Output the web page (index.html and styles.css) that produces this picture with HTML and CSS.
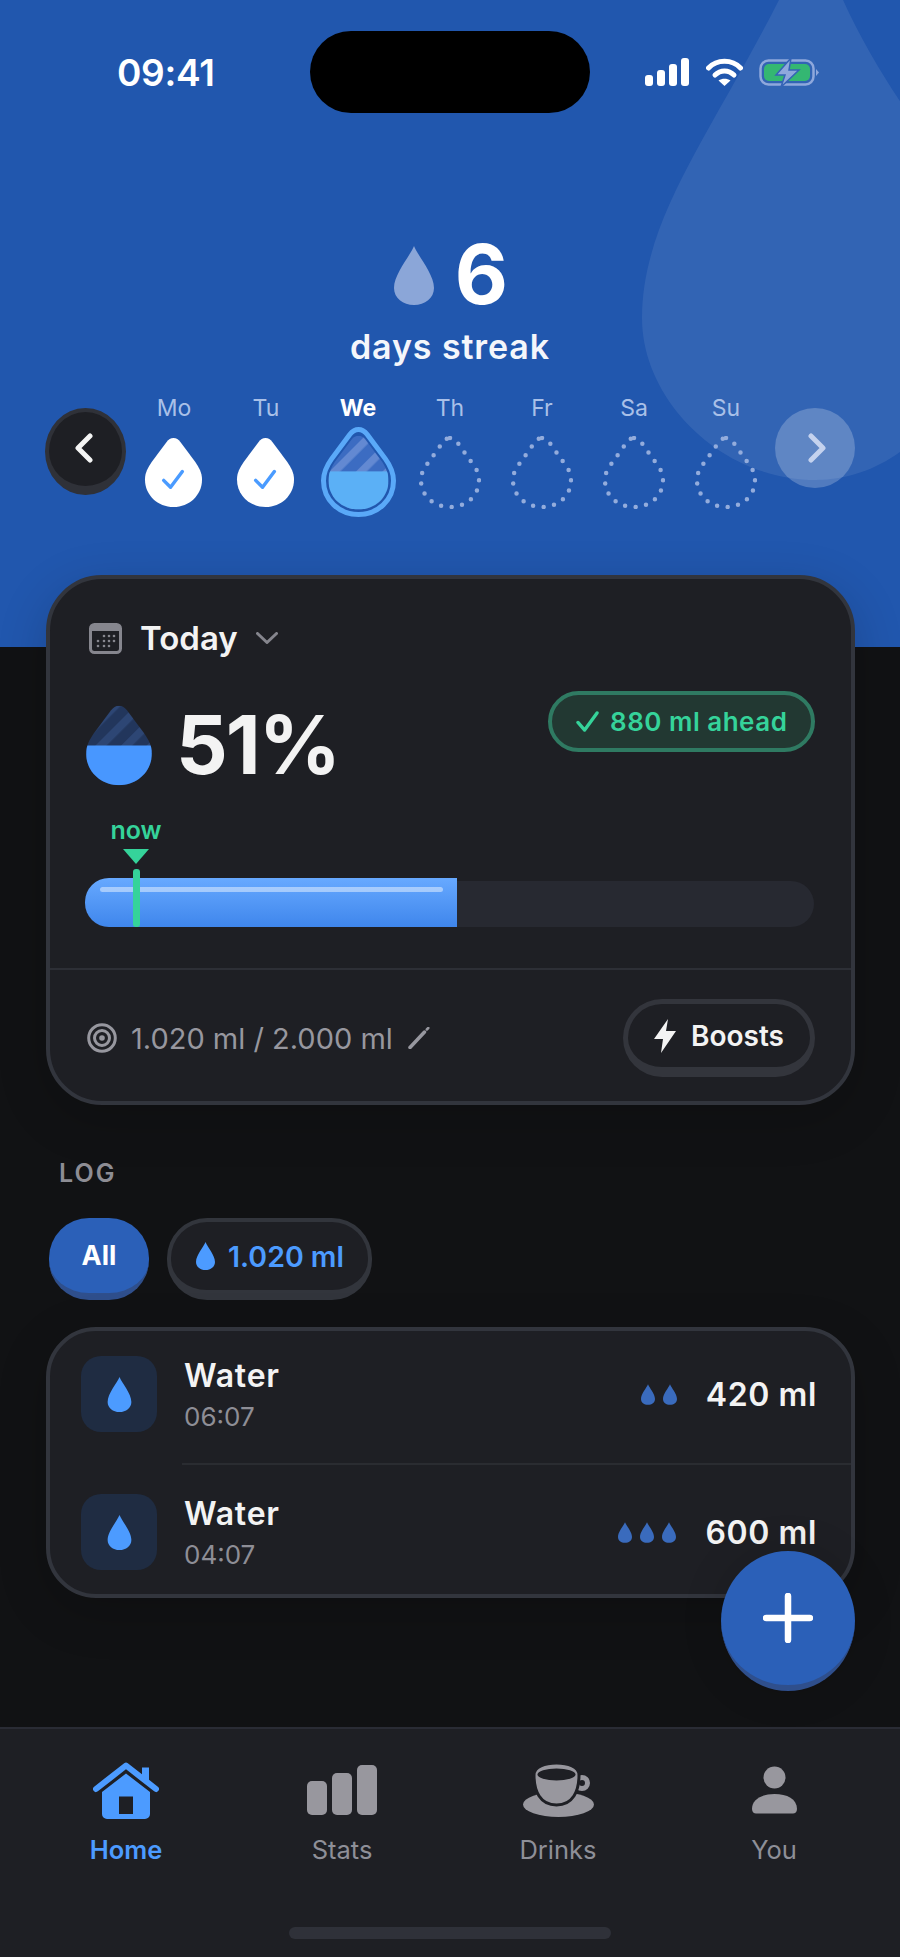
FILE: index.html
```html
<!DOCTYPE html>
<html lang="en">
<head>
<meta charset="utf-8">
<title>Water streak</title>
<link rel="stylesheet" href="styles.css">
</head>
<body>
<svg class="defs" width="0" height="0" aria-hidden="true">
  <defs>
    <symbol id="drop-fat" viewBox="0 0 60 72"><path d="M30 1C33 1 35 2.5 37 5L52 25C56 31 59 36 59 43C59 59 46 71 30 71C14 71 1 59 1 43C1 36 4 31 8 25L23 5C25 2.5 27 1 30 1Z"/></symbol>
    <symbol id="drop-slim" viewBox="0 0 40 59"><path d="M20 0C24 10 40 28 40 42C40 52 31 59 20 59C9 59 0 52 0 42C0 28 16 10 20 0Z"/></symbol>
    <pattern id="hatch-light" width="15" height="15" patternUnits="userSpaceOnUse" patternTransform="rotate(45)"><rect width="15" height="15" fill="#3c6cc2"/><rect width="6" height="15" fill="#6389d2"/></pattern>
    <pattern id="hatch-dark" width="16" height="16" patternUnits="userSpaceOnUse" patternTransform="rotate(45)"><rect width="16" height="16" fill="#22365c"/><rect width="7" height="16" fill="#2d4674"/></pattern>
    <clipPath id="clip-we"><path d="M30 7C32 7 34 8 35.500 10L49 28C52 33 54 37 54 43C54 56 43.500 66 30 66C16.500 66 6 56 6 43C6 37 8 33 11 28L24.500 10C26 8 28 7 30 7Z"/></clipPath>
    <clipPath id="clip-card"><path d="M30 1C33 1 35 2.500 37 5L52 25C56 31 59 36 59 43C59 59 46 71 30 71C14 71 1 59 1 43C1 36 4 31 8 25L23 5C25 2.500 27 1 30 1Z"/></clipPath>
  </defs>
</svg>

<main class="phone">
  <div class="sky"></div>
  <svg class="sky-drop" viewBox="0 0 320 560" aria-hidden="true"><path d="M175 0C190 70 230 140 275 205C310 260 335 300 335 375C335 480 260 560 175 560C80 560 1 480 1 398C1 280 100 180 175 0Z"/></svg>

  <header class="status">
    <div class="status-time">09:41</div>
    <div class="island"></div>
    <div class="status-icons">
      <div class="signal"><i class="s1"></i><i class="s2"></i><i class="s3"></i><i class="s4"></i></div>
      <svg class="wifi" viewBox="0 0 37 28"><path class="wifi-arc" d="M2.500 10C11 1 26 1 34.500 10"/><path class="wifi-arc" d="M9 17C14.500 11.500 22.500 11.500 28 17"/><path class="wifi-dot" d="M12.500 22.500C16 20 21 20 24.500 22.500L18.500 28Z"/></svg>
      <svg class="battery" viewBox="0 0 61 29"><rect class="bat-shell" x="1.500" y="2.500" width="53" height="24" rx="8"/><rect class="bat-fill" x="5" y="6" width="46" height="17" rx="5"/><path class="bat-nub" d="M57 11L60 14.500L57 18Z"/><path class="bat-bolt" d="M32 0L17 17H26L22 29L40 12H30Z"/></svg>
    </div>
  </header>

  <section class="streak">
    <div class="streak-count">
      <svg class="streak-drop"><use href="#drop-slim"/></svg>
      <span class="streak-num">6</span>
    </div>
    <div class="streak-label">days streak</div>
  </section>

  <section class="week">
    <button class="nav nav-prev" aria-label="Previous"><svg viewBox="0 0 20 30"><path d="M16 3L4 15L16 27"/></svg></button>
    <div class="days">
      <div class="day"><span class="day-name">Mo</span><div class="day-mark"><svg class="drop-done" viewBox="0 0 60 72"><use href="#drop-fat" width="60" height="72"/><path class="tick" d="M20 44L27 51L39 35"/></svg></div></div>
      <div class="day"><span class="day-name">Tu</span><div class="day-mark"><svg class="drop-done" viewBox="0 0 60 72"><use href="#drop-fat" width="60" height="72"/><path class="tick" d="M20 44L27 51L39 35"/></svg></div></div>
      <div class="day"><span class="day-name is-today">We</span><div class="day-mark"><svg class="drop-today" viewBox="0 0 60 72"><g clip-path="url(#clip-we)"><rect width="60" height="72" fill="url(#hatch-light)"/><rect y="35.500" width="60" height="37" fill="#5bb0f6"/></g><path class="today-ring" d="M30 2C33 2 35 3.500 37 6L51.500 25.500C55.500 31 58 36 58 43C58 58.500 45.500 70 30 70C14.500 70 2 58.500 2 43C2 36 4.500 31 8.500 25.500L23 6C25 3.500 27 2 30 2Z"/></svg></div></div>
      <div class="day"><span class="day-name">Th</span><div class="day-mark"><svg class="drop-empty" viewBox="0 0 62 73"><path d="M31 2C34 2 36 3.500 38 6L53 27C57 32 60 37 60 44C60 60 47 71 31 71C15 71 2 60 2 44C2 37 5 32 9 27L24 6C26 3.500 28 2 31 2Z"/></svg></div></div>
      <div class="day"><span class="day-name">Fr</span><div class="day-mark"><svg class="drop-empty" viewBox="0 0 62 73"><path d="M31 2C34 2 36 3.500 38 6L53 27C57 32 60 37 60 44C60 60 47 71 31 71C15 71 2 60 2 44C2 37 5 32 9 27L24 6C26 3.500 28 2 31 2Z"/></svg></div></div>
      <div class="day"><span class="day-name">Sa</span><div class="day-mark"><svg class="drop-empty" viewBox="0 0 62 73"><path d="M31 2C34 2 36 3.500 38 6L53 27C57 32 60 37 60 44C60 60 47 71 31 71C15 71 2 60 2 44C2 37 5 32 9 27L24 6C26 3.500 28 2 31 2Z"/></svg></div></div>
      <div class="day"><span class="day-name">Su</span><div class="day-mark"><svg class="drop-empty" viewBox="0 0 62 73"><path d="M31 2C34 2 36 3.500 38 6L53 27C57 32 60 37 60 44C60 60 47 71 31 71C15 71 2 60 2 44C2 37 5 32 9 27L24 6C26 3.500 28 2 31 2Z"/></svg></div></div>
    </div>
    <button class="nav nav-next" aria-label="Next"><svg viewBox="0 0 20 30"><path d="M4 3L16 15L4 27"/></svg></button>
  </section>

  <section class="card today">
    <div class="today-head">
      <svg class="cal" viewBox="0 0 33 31">
        <rect class="cal-frame" x="1.500" y="1.500" width="30" height="28" rx="4"/><path class="cal-top" d="M5 1.500H28A3.500 3.500 0 0 1 31.500 5V8H1.500V5A3.500 3.500 0 0 1 5 1.500Z"/>
        <g class="cal-dots"><circle cx="15" cy="13" r="1.300"/><circle cx="20" cy="13" r="1.300"/><circle cx="25" cy="13" r="1.300"/><circle cx="9" cy="18" r="1.300"/><circle cx="15" cy="18" r="1.300"/><circle cx="20" cy="18" r="1.300"/><circle cx="25" cy="18" r="1.300"/><circle cx="9" cy="23" r="1.300"/><circle cx="15" cy="23" r="1.300"/><circle cx="20" cy="23" r="1.300"/></g>
      </svg>
      <span class="today-title">Today</span>
      <svg class="chev" viewBox="0 0 22 12"><path d="M1.500 1.500L11 10.500L20.500 1.500"/></svg>
    </div>
    <div class="today-main">
      <div class="pct">
        <svg class="pct-drop" viewBox="0 0 60 72"><g clip-path="url(#clip-card)"><rect width="60" height="72" fill="url(#hatch-dark)"/><rect y="36" width="60" height="36" fill="#4897ff"/></g></svg>
        <span class="pct-num">51%</span>
      </div>
      <div class="ahead">
        <svg class="ahead-tick" viewBox="0 0 24 22"><path d="M2 12L9 20L22 2"/></svg>
        <span>880 ml ahead</span>
      </div>
    </div>
    <div class="progress">
      <div class="track"><div class="fill" style="width:51%"><i class="fill-shine"></i></div></div>
      <div class="now"><span class="now-label">now</span><i class="now-tri"></i><i class="now-line"></i></div>
    </div>
    <div class="rule"></div>
    <div class="today-foot">
      <div class="goal">
        <svg class="target" viewBox="0 0 30 30"><circle cx="15" cy="15" r="13.300"/><circle cx="15" cy="15" r="7.500"/><circle class="target-dot" cx="15" cy="15" r="2.800"/></svg>
        <span>1.020 ml / 2.000 ml</span>
        <svg class="pencil" viewBox="0 0 22 22"><path class="pencil-body" d="M2 20.500L16.500 5"/><path class="pencil-tip" d="M18.800 2.500L20.300 1"/></svg>
      </div>
      <button class="boosts"><svg viewBox="0 0 22 34"><path d="M14 0L0 20H9L7 34L22 12H12Z"/></svg><span>Boosts</span></button>
    </div>
  </section>

  <h2 class="log-title">LOG</h2>
  <div class="filters">
    <button class="chip chip-on">All</button>
    <button class="chip chip-water"><svg class="chip-drop"><use href="#drop-slim"/></svg><span>1.020 ml</span></button>
  </div>

  <section class="card list">
    <div class="row row-first">
      <div class="row-icon"><svg class="row-drop"><use href="#drop-slim"/></svg></div>
      <div class="row-text"><div class="row-name">Water</div><div class="row-time">06:07</div></div>
      <div class="row-end">
        <div class="mini"><svg><use href="#drop-slim"/></svg><svg><use href="#drop-slim"/></svg></div>
        <div class="row-amount">420 ml</div>
      </div>
    </div>
    <div class="row-rule"></div>
    <div class="row row-last">
      <div class="row-icon"><svg class="row-drop"><use href="#drop-slim"/></svg></div>
      <div class="row-text"><div class="row-name">Water</div><div class="row-time">04:07</div></div>
      <div class="row-end">
        <div class="mini"><svg><use href="#drop-slim"/></svg><svg><use href="#drop-slim"/></svg><svg><use href="#drop-slim"/></svg></div>
        <div class="row-amount">600 ml</div>
      </div>
    </div>
  </section>

  <button class="fab" aria-label="Add"><svg viewBox="0 0 50 50"><path d="M25 3V47M3 25H47"/></svg></button>

  <nav class="tabbar">
    <div class="tabs">
      <div class="tab tab-on">
        <div class="tab-icon"><svg class="i-home" viewBox="0 0 66 57"><path class="home-chim" d="M49 5.500H56V20H49Z"/><path class="home-roof" d="M3 27L33 3.500L63 27"/><path class="home-body" fill-rule="evenodd" d="M9 30L33 11.500L57 30V52A5 5 0 0 1 52 57H14A5 5 0 0 1 9 52ZM26 34.500V52H40V34.500Z"/></svg></div>
        <span>Home</span>
      </div>
      <div class="tab">
        <div class="tab-icon"><svg class="i-stats" viewBox="0 0 70 50"><rect y="16" width="20" height="34" rx="5"/><rect x="25" y="8" width="20" height="42" rx="5"/><rect x="50" width="20" height="50" rx="5"/></svg></div>
        <span>Stats</span>
      </div>
      <div class="tab">
        <div class="tab-icon"><svg class="i-drinks" viewBox="0 0 71 54"><ellipse class="cup-saucer" cx="35.500" cy="41.500" rx="35.500" ry="12.500"/><circle class="cup-handle" cx="59" cy="20" r="5.500"/><path class="cup-body" d="M11 12C11 4 22 0 33.500 0C45 0 56 4 56 12C56 28 50 42 33.500 42C17 42 11 28 11 12Z"/><ellipse class="cup-inner" cx="33.500" cy="11.500" rx="19" ry="6"/></svg></div>
        <span>Drinks</span>
      </div>
      <div class="tab">
        <div class="tab-icon"><svg class="i-you" viewBox="0 0 45 48"><circle cx="22.500" cy="11.500" r="11"/><path d="M0 43C0 33 10 28 22.500 28C35 28 45 33 45 43C45 46 43 47.500 41 47.500H4C2 47.500 0 46 0 43Z"/></svg></div>
        <span>You</span>
      </div>
    </div>
    <div class="home-bar"></div>
  </nav>
</main>
</body>
</html>
```
FILE: styles.css
```css
* { box-sizing: border-box; }
html, body { margin: 0; padding: 0; background: #111214; }
body { font-family: "Inter", "Liberation Sans", sans-serif; color: #f3f3f3; }
button { font: inherit; color: inherit; padding: 0; cursor: pointer; }
svg { display: block; }
.defs { position: absolute; }

.phone { position: relative; width: 900px; height: 1957px; overflow: hidden; display: flex; flex-direction: column; background: #111214; }
.sky { position: absolute; left: 0; top: 0; width: 900px; height: 647px; background: #2157ae; }
.sky-drop { position: absolute; left: 641px; top: -80px; width: 320px; height: 560px; fill: rgba(255,255,255,.08); }
.phone > *:not(.sky):not(.sky-drop):not(.fab) { position: relative; }

/* status bar */
.status { display: grid; grid-template-columns: 310px 280px 310px; align-items: center; margin-top: 31px; height: 82px; }
.status-time { padding-left: 117px; font-size: 37px; font-weight: 600; color: #fff; letter-spacing: -.3px; }
.island { height: 82px; background: #000; border-radius: 41px; }
.status-icons { display: flex; align-items: center; padding-left: 55px; height: 30px; }
.signal { display: flex; align-items: flex-end; gap: 4.500px; width: 44px; height: 28px; }
.signal i { width: 7.500px; background: #fff; border-radius: 3px; }
.s1 { height: 11px; } .s2 { height: 16px; } .s3 { height: 22px; } .s4 { height: 28px; }
.wifi { width: 37px; height: 28px; margin-left: 17px; }
.wifi-arc { fill: none; stroke: #fff; stroke-width: 5; stroke-linecap: round; }
.wifi-dot { fill: #fff; }
.battery { width: 61px; height: 29px; margin-left: 16px; }
.bat-shell { fill: none; stroke: #8fa8dc; stroke-width: 2.500; }
.bat-fill { fill: #34b772; }
.bat-nub { fill: #8fa8dc; }
.bat-bolt { fill: #8fa8dc; stroke: #3463b6; stroke-width: 1.500; }

/* streak */
.streak { margin-top: 127px; display: flex; flex-direction: column; align-items: center; }
.streak-count { display: flex; align-items: center; justify-content: center; gap: 21px; height: 70px; padding-left: 2px; }
.streak-drop { width: 40px; height: 59px; fill: #8ba6d8; }
.streak-num { font-size: 82px; line-height: 70px; font-weight: 700; color: #fff; }
.streak-label { margin-top: 17px; font-size: 34px; line-height: 40px; font-weight: 600; letter-spacing: .9px; color: #f4f6fb; }

/* week */
.week { margin-top: 29px; padding: 0 45px; display: flex; align-items: flex-start; }
.nav { width: 81px; height: 87px; margin-top: 12px; flex: none; border: 0; border-radius: 50%; display: flex; align-items: center; justify-content: center; }
.nav svg { width: 20px; height: 30px; fill: none; stroke-width: 5; stroke-linecap: round; stroke-linejoin: round; }
.nav-prev { background: #1e1f24; border-style: solid; border-color: #2f3138; border-width: 4px 4px 9px; }
.nav-prev svg { stroke: #f4f4f4; margin-top: -2px; margin-left: -4px; }
.nav-next { width: 80px; height: 80px; background: rgba(255,255,255,.22); margin-left: 3px; }
.nav-next svg { stroke: #c4d2ee; margin-left: 3px; }
.days { display: flex; width: 644px; margin-left: 2px; }
.day { width: 92px; display: flex; flex-direction: column; align-items: center; }
.day-name { font-size: 23px; line-height: 24px; color: #a9c0e8; }
.day-name.is-today { color: #fff; font-weight: 700; }
.day-mark { margin-top: 7px; height: 90px; display: flex; align-items: center; justify-content: center; }
.drop-done { width: 59px; height: 71px; fill: #fff; margin-left: -1px; }
.tick { fill: none; stroke: #4a9bff; stroke-width: 3.500; stroke-linecap: round; stroke-linejoin: round; }
.drop-today { width: 75px; height: 90px; }
.today-ring { fill: none; stroke: #5aa9f8; stroke-width: 4; }
.drop-empty { width: 62px; height: 73px; fill: none; stroke: #93acdc; stroke-width: 4.500; stroke-linecap: round; stroke-dasharray: 0 10.600; }

/* cards */
.card { margin: 0 45px 0 46px; background: #1e1f24; border: 4px solid #32353d; border-radius: 56px; box-shadow: 0 14px 50px rgba(0,0,0,.18); }
.today { margin-top: 58px; height: 530px; }
.today-head { display: flex; align-items: center; padding: 43px 0 0 39px; }
.cal { width: 33px; height: 31px; }
.cal-frame { fill: #1e1f24; stroke: #86868e; stroke-width: 3; }
.cal-top { fill: #86868e; }
.cal-dots { fill: #86868e; }
.today-title { margin-left: 18px; font-size: 33px; line-height: 32px; font-weight: 600; color: #f3f3f3; }
.chev { width: 22px; height: 12px; margin-left: 18px; fill: none; stroke: #85858d; stroke-width: 3; stroke-linecap: round; stroke-linejoin: round; }

.today-main { display: flex; justify-content: space-between; align-items: flex-start; padding: 37px 36px 0 35px; }
.pct { display: flex; align-items: center; margin-top: 13px; gap: 23px; }
.pct-drop { width: 68px; height: 83px; }
.pct-num { font-size: 81px; line-height: 83px; font-weight: 700; color: #f3f3f3; letter-spacing: -2px; }
.ahead { display: flex; align-items: center; width: 267px; height: 61px; padding-left: 24px; gap: 11px; background: #223832; border: 4px solid #2f7a62; border-radius: 31px; color: #35d39a; font-size: 26px; font-weight: 600; letter-spacing: .5px; white-space: nowrap; }
.ahead-tick { width: 23px; height: 21px; flex: none; fill: none; stroke: #35d39a; stroke-width: 3.500; stroke-linecap: round; stroke-linejoin: round; }

.progress { position: relative; margin: 30px 37px 0 35px; height: 110px; display: flex; align-items: flex-end; }
.track { width: 100%; height: 46px; background: #272931; border-radius: 23px; display: flex; align-items: flex-end; }
.fill { position: relative; height: 49px; background: linear-gradient(#67a9ff, #3f86ec); border-radius: 24px 0 0 24px; }
.fill-shine { position: absolute; left: 15px; right: 14px; top: 9px; height: 5px; border-radius: 3px; background: rgba(255,255,255,.45); }
.now { position: absolute; left: 25px; top: 0; width: 52px; height: 110px; display: flex; flex-direction: column; align-items: center; }
.now-label { font-size: 25px; line-height: 26px; font-weight: 600; color: #35d39a; }
.now-tri { margin-top: 6px; width: 0; height: 0; border-left: 13px solid transparent; border-right: 13px solid transparent; border-top: 15px solid #35d39a; }
.now-line { margin-top: 5px; width: 7px; height: 67px; border-radius: 3px; background: #35d39a; }

.rule { margin-top: 41px; height: 2px; background: #2d2f36; }
.today-foot { display: flex; align-items: center; justify-content: space-between; padding: 29px 36px 24px 37px; }
.goal { display: flex; align-items: center; font-size: 29px; color: #97979f; }
.target { width: 30px; height: 30px; margin-right: 14px; fill: none; stroke: #97979f; stroke-width: 3; }
.target-dot { fill: #97979f; stroke: none; }
.pencil { width: 22px; height: 22px; margin-left: 15px; fill: none; stroke: #97979f; stroke-linecap: round; }
.pencil-body { stroke-width: 3.500; }
.pencil-tip { stroke-width: 2.500; }
.boosts { display: flex; align-items: center; justify-content: center; gap: 15px; width: 192px; height: 78px; padding-top: 0; background: #1e1f24; border-style: solid; border-color: #33353c; border-width: 5px 5px 10px; border-radius: 39px; font-size: 28px; font-weight: 600; color: #f3f3f3; }
.boosts svg { width: 22px; height: 34px; fill: #f3f3f3; }

/* log */
.log-title { margin: 53px 0 0 59px; font-size: 25px; line-height: 30px; font-weight: 600; letter-spacing: 2px; color: #8d8d94; }
.filters { margin: 30px 0 0 49px; display: flex; gap: 18px; }
.chip { height: 82px; border-radius: 40px; font-size: 27px; font-weight: 600; display: flex; align-items: center; justify-content: center; }
.chip-on { width: 100px; background: #2b60b8; border: 0; border-bottom: 7px solid #2f4f8c; color: #fff; font-weight: 700; }
.chip-water { width: 205px; gap: 12px; background: #1e1f24; border-style: solid; border-color: #32353c; border-width: 4px 4px 10px; color: #4c9bff; font-size: 28.500px; }
.chip-drop { width: 21px; height: 28px; fill: #4c9bff; }

.list { margin-top: 27px; height: 271px; border-radius: 50px; }
.row { display: flex; align-items: flex-start; padding-left: 31px; padding-right: 34px; }
.row-first { padding-top: 25px; padding-bottom: 31px; }
.row-last { padding-top: 29px; padding-bottom: 24px; }
.row-rule { margin-left: 132px; height: 2px; background: #2a2c31; }
.row-icon { width: 76px; height: 76px; flex: none; border-radius: 20px; background: #1f2c42; display: flex; align-items: center; justify-content: center; }
.row-drop { width: 25px; height: 35px; fill: #4c9bff; }
.row-text { margin-left: 27px; height: 76px; padding-top: 1px; display: flex; flex-direction: column; justify-content: space-between; }
.row-name { font-size: 32px; line-height: 38px; font-weight: 600; letter-spacing: .8px; color: #f3f3f3; }
.row-time { font-size: 26px; line-height: 30px; color: #8e8e96; }
.row-end { margin-left: auto; height: 76px; display: flex; align-items: center; gap: 29px; }
.mini { display: flex; gap: 8px; }
.mini svg { width: 14px; height: 21px; fill: #3a6bbd; }
.row-amount { font-size: 32px; font-weight: 600; letter-spacing: .6px; color: #f3f3f3; }

.fab { position: absolute; left: 721px; top: 1551px; width: 134px; height: 140px; border: 0; border-bottom: 6px solid #2f4f8c; border-radius: 50%; background: #2b60b8; display: flex; align-items: center; justify-content: center; box-shadow: 0 0 40px rgba(0,0,0,.15); }
.fab svg { width: 50px; height: 50px; fill: none; stroke: #fff; stroke-width: 6.500; stroke-linecap: round; }

/* tabs */
.tabbar { margin-top: auto; height: 230px; background: #1e1f24; border-top: 2px solid #2a2c35; display: flex; flex-direction: column; }
.tabs { display: flex; padding: 31px 0 0 18px; }
.tab { width: 216px; display: flex; flex-direction: column; align-items: center; font-size: 25.500px; line-height: 30px; color: #8e8f98; }
.tab-icon { height: 60px; display: flex; align-items: center; justify-content: center; margin-bottom: 15px; }
.tab-on { color: #4c9bff; font-weight: 600; }
.i-home { width: 66px; height: 57px; }
.home-roof { fill: none; stroke: #4c9bff; stroke-width: 6; stroke-linecap: round; stroke-linejoin: round; }
.home-body, .home-chim { fill: #4c9bff; }
.i-stats { width: 70px; height: 50px; fill: #98979e; }
.i-drinks { width: 71px; height: 54px; }
.cup-saucer { fill: #98979e; }
.cup-handle { fill: none; stroke: #98979e; stroke-width: 5; }
.cup-body { fill: #98979e; stroke: #1e1f24; stroke-width: 3; }
.cup-inner { fill: #1e1f24; }
.i-you { width: 45px; height: 48px; fill: #98979e; }
.home-bar { align-self: center; margin-top: 62px; width: 322px; height: 12px; border-radius: 6px; background: #2f3139; }
```
